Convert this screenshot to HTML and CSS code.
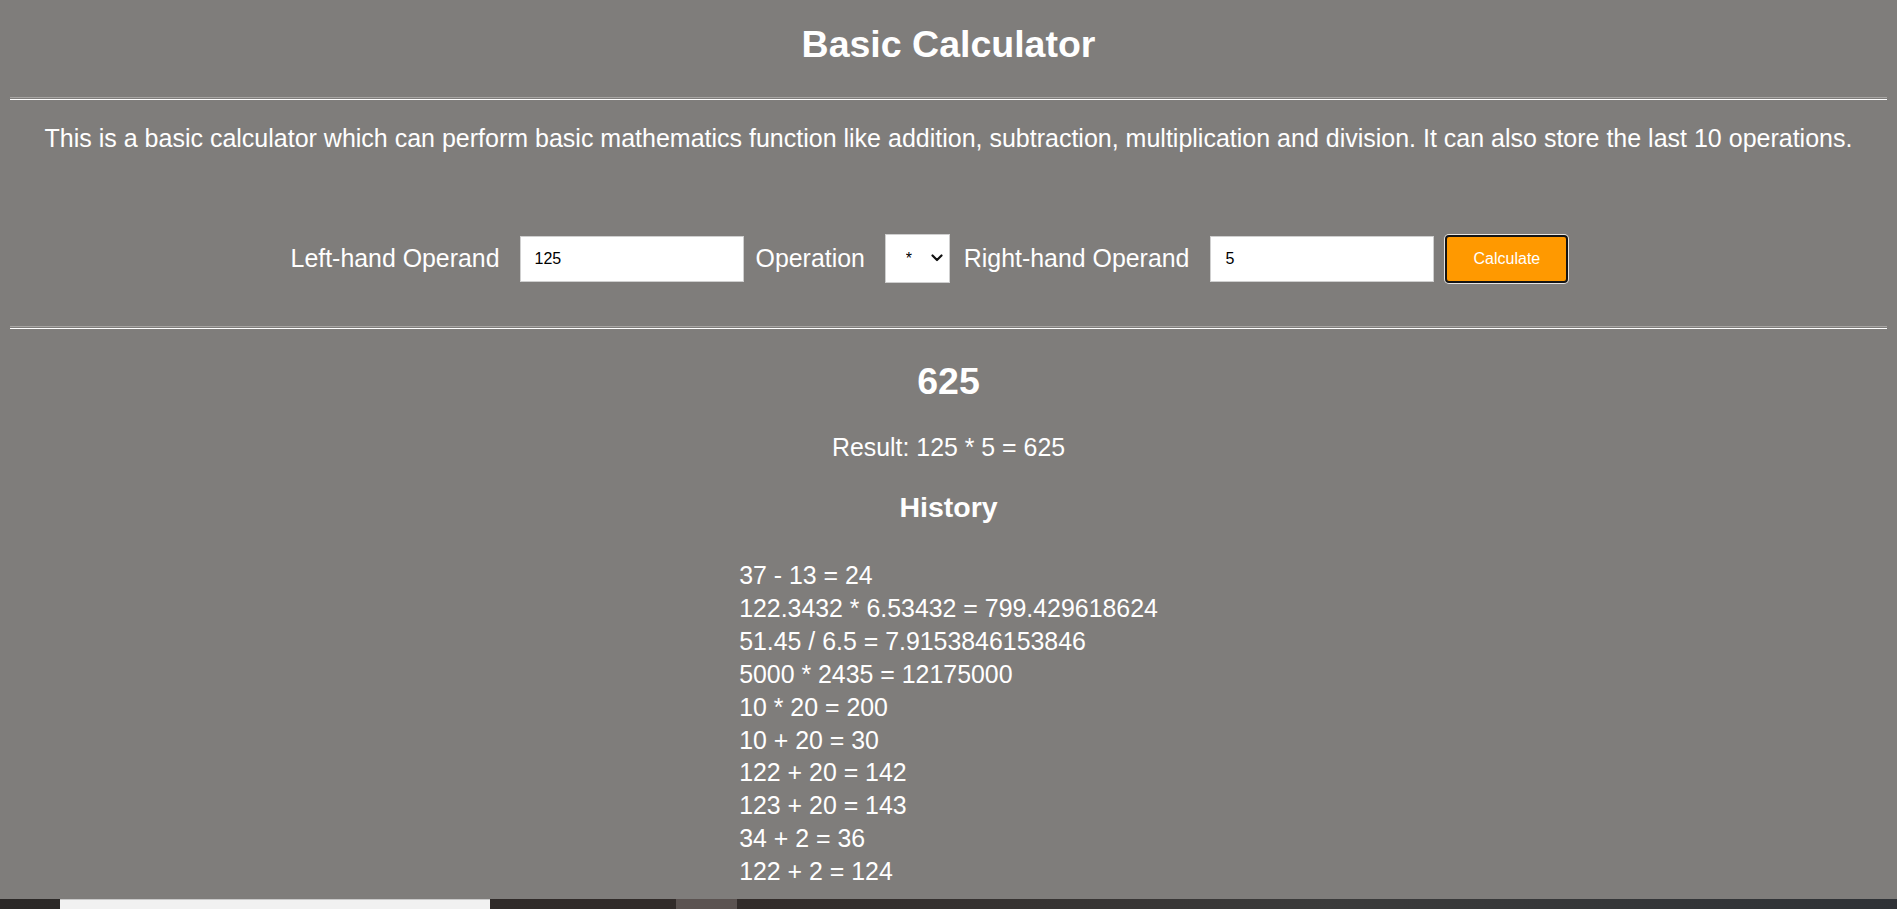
FILE: index.html
```html
<!DOCTYPE html>
<html lang="en">
<head>
<meta charset="utf-8">
<title>Basic Calculator</title>
<link rel="stylesheet" href="styles.css">
</head>
<body>
  <h1 class="title">Basic Calculator</h1>
  <hr class="rule rule-top">
  <p class="intro">This is a basic calculator which can perform basic mathematics function like addition, subtraction, multiplication and division. It can also store the last 10 operations.</p>

  <form class="form-row">
    <label class="label label-left" for="lhs">Left-hand Operand</label>
    <input class="field field-left" id="lhs" type="text" value="125">
    <label class="label label-op" for="op">Operation</label>
    <span class="select-wrap">
      <select class="op-select" id="op">
        <option>+</option>
        <option>-</option>
        <option selected>*</option>
        <option>/</option>
      </select>
      <svg class="chevron" width="12" height="8" viewBox="0 0 12 8"><path d="M1.5 1.5 L6 6 L10.5 1.5" fill="none" stroke="#111" stroke-width="2.2" stroke-linecap="round" stroke-linejoin="round"/></svg>
    </span>
    <label class="label label-right" for="rhs">Right-hand Operand</label>
    <input class="field field-right" id="rhs" type="text" value="5">
    <button class="calc-btn" type="button">Calculate</button>
  </form>

  <hr class="rule rule-bottom">

  <h1 class="answer">625</h1>
  <p class="result">Result: 125 * 5 = 625</p>
  <h2 class="history-title">History</h2>
  <div class="history-wrap">
    <ul class="history-list">
      <li>37 - 13 = 24</li>
      <li>122.3432 * 6.53432 = 799.429618624</li>
      <li>51.45 / 6.5 = 7.9153846153846</li>
      <li>5000 * 2435 = 12175000</li>
      <li>10 * 20 = 200</li>
      <li>10 + 20 = 30</li>
      <li>122 + 20 = 142</li>
      <li>123 + 20 = 143</li>
      <li>34 + 2 = 36</li>
      <li>122 + 2 = 124</li>
    </ul>
  </div>

  <div class="taskbar">
    <div class="task-search"></div>
    <div class="task-app"></div>
  </div>
</body>
</html>
```

FILE: styles.css
```css
html, body {
  margin: 0;
}

body {
  padding: 0 10px;
  background: #7f7d7b;
  color: #ffffff;
  font-family: "Liberation Sans", Arial, sans-serif;
}

.title {
  margin: 0;
  padding-top: 22px;
  font-size: 37.5px;
  line-height: 44px;
  font-weight: bold;
  text-align: center;
}

.rule {
  display: block;
  height: 1px;
  margin: 0;
  border: 0;
  border-top: 1px solid #a7a5a3;
  border-bottom: 1px solid #ffffff;
}

.rule-top {
  margin-top: 31px;
}

.intro {
  margin: 24px 0 0;
  font-size: 25px;
  line-height: 29px;
  text-align: center;
}

.form-row {
  display: flex;
  align-items: center;
  justify-content: center;
  margin: 81px 0 0;
  padding-right: 38px;
}

.label {
  font-size: 24.9px;
  line-height: 29px;
  white-space: nowrap;
}

.label-left { margin-right: 20px; }
.label-op { margin-right: 20px; }
.label-right { margin-right: 21px; }

.field {
  box-sizing: border-box;
  width: 224px;
  height: 46px;
  margin: 0;
  padding: 0 0 0 14px;
  border: 1px solid #cfcfcf;
  background: #ffffff;
  color: #000000;
  font-family: "Liberation Sans", Arial, sans-serif;
  font-size: 16px;
  outline: none;
}

.field-left { margin-right: 12px; }
.field-right { margin-right: 11px; }

.select-wrap {
  position: relative;
  display: inline-block;
  margin-right: 14px;
}

.op-select {
  box-sizing: border-box;
  display: block;
  width: 65px;
  height: 49px;
  margin: 0;
  padding: 0 0 0 20px;
  border: 1px solid #cfcfcf;
  border-radius: 0;
  background: #ffffff;
  color: #000000;
  font-family: "Liberation Sans", Arial, sans-serif;
  font-size: 16px;
  -webkit-appearance: none;
  appearance: none;
  outline: none;
}

.chevron {
  position: absolute;
  left: 46px;
  top: 20px;
  pointer-events: none;
}

.calc-btn {
  box-sizing: border-box;
  width: 123px;
  height: 48px;
  margin: 0;
  padding: 0;
  border: 2px solid #141414;
  border-radius: 4px;
  background: #ff9900;
  box-shadow: 0 0 0 1px #e6e4e2;
  color: #ffffff;
  font-family: "Liberation Sans", Arial, sans-serif;
  font-size: 16px;
}

.rule-bottom {
  margin-top: 43px;
}

.answer {
  margin: 30px 0 0;
  font-size: 37.5px;
  line-height: 44px;
  font-weight: bold;
  text-align: center;
}

.result {
  margin: 30px 0 0;
  font-size: 24.9px;
  line-height: 29px;
  text-align: center;
}

.history-title {
  margin: 28.6px 0 0;
  font-size: 28.5px;
  line-height: 33px;
  font-weight: bold;
  text-align: center;
}

.history-wrap {
  margin-top: 35.4px;
  text-align: center;
}

.history-list {
  display: inline-block;
  margin: 0;
  padding: 0;
  list-style: none;
  text-align: left;
  font-size: 24.9px;
  line-height: 32.9px;
}

.taskbar {
  position: fixed;
  left: 0;
  right: 0;
  bottom: 0;
  height: 10px;
  background: linear-gradient(90deg, #2b2827 0%, #322c2a 40%, #3b3b3b 70%, #2f3236 100%);
}

.task-search {
  position: absolute;
  left: 60px;
  top: 0;
  width: 430px;
  height: 10px;
  box-sizing: border-box;
  border-top: 1px solid #c9c9c9;
  background: #f1f1f1;
}

.task-app {
  position: absolute;
  left: 676px;
  top: 0;
  width: 61px;
  height: 10px;
  background: #5b5351;
}
```
